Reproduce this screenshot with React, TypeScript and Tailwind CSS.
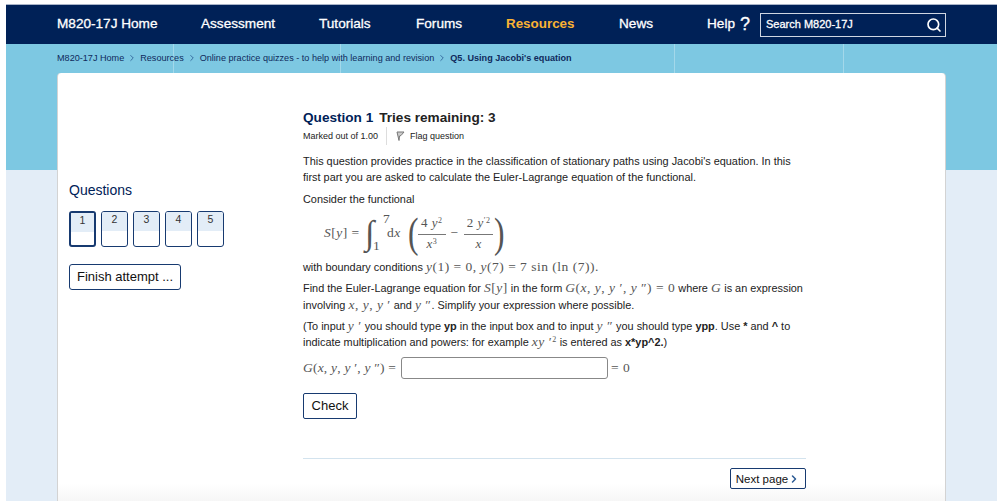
import type { ReactNode } from "react";
import { ChevronRight, Search } from "lucide-react";

const crumbs = ["M820-17J Home", "Resources", "Online practice quizzes - to help with learning and revision"];

// inline maths: serif, gray and a bit spaced out like the typeset equations
function M({ children, className = "" }: { children: ReactNode; className?: string }) {
  return (
    <span className={`font-['Liberation_Serif',serif] text-[13.5px] leading-none tracking-[0.5px] text-[#555] ${className}`}>
      {children}
    </span>
  );
}

function I({ children }: { children: ReactNode }) {
  return <i>{children}</i>;
}

function Frac({ top, bottom }: { top: ReactNode; bottom: ReactNode }) {
  return (
    <span className="inline-flex flex-col items-center text-[13px] leading-[18px]">
      <span className="h-[20px] px-[3px]">{top}</span>
      <span className="h-[18px] w-full border-t border-[#777] text-center">{bottom}</span>
    </span>
  );
}

export default function App() {
  return (
    <div className="h-[501px] w-[1004px] overflow-hidden bg-white font-['Liberation_Sans',sans-serif]">
      <div className="h-[4px] w-full bg-white" />
      <div className="h-[497px] pl-[6px] pr-[7px]">
        <header className="flex h-[40px] items-center border-t border-[#a9b4c8] bg-[#002157] pl-[51px] text-[13.6px] text-white [-webkit-text-stroke:0.3px_white]">
          <span className="w-[144px]">M820-17J Home</span>
          <span className="w-[118px]">Assessment</span>
          <span className="w-[97px]">Tutorials</span>
          <span className="w-[90px]">Forums</span>
          <span className="w-[113px] text-[13.4px] font-bold text-[#f9b233] [-webkit-text-stroke:0]">Resources</span>
          <span className="w-[88px]">News</span>
          <span className="flex w-[53px] items-center gap-[5px]">
            Help <span className="text-[18px] leading-none">?</span>
          </span>
          <div className="flex h-[24px] w-[186px] items-center justify-between border border-[#cfd6e2] pl-[5px] pr-[3px] text-[11px]">
            Search M820-17J
            <Search size={16} strokeWidth={2.5} />
          </div>
        </header>

        <div className="h-[457px] bg-[linear-gradient(#7dc8e2_0,#7dc8e2_126px,#e3edf7_126px)]">
          <nav className="relative flex h-[29px] items-center gap-[3px] pl-[51px] text-[9.1px] text-[#0f2a5c]">
            <span className="absolute left-[167px] top-0 h-full w-px bg-[#a3d8ea]" />
            <span className="absolute left-[334px] top-0 h-full w-px bg-[#a3d8ea]" />
            <span className="absolute left-[668px] top-0 h-full w-px bg-[#a3d8ea]" />
            <span className="absolute left-[837px] top-0 h-full w-px bg-[#a3d8ea]" />
            {crumbs.map((crumb) => (
              <span key={crumb} className="relative flex items-center gap-[3px]">
                {crumb}
                <ChevronRight size={10} className="text-[#2b5a93]" />
              </span>
            ))}
            <b className="relative">Q5. Using Jacobi's equation</b>
          </nav>

          <main className="ml-[51px] flex h-[428px] w-[889px] rounded-t-[4px] border-x border-[#d3d3d3] bg-[linear-gradient(#fff_0,#fff_410px,#f6f6f6_428px)]">
            <aside className="w-[245px] shrink-0 pl-[11px] pt-[108px]">
              <h2 className="text-[14px] leading-[18px] text-[#002157]">Questions</h2>
              <div className="mt-[12px] flex gap-[5px]">
                {[1, 2, 3, 4, 5].map((n) => (
                  <div
                    key={n}
                    className={`h-[36px] w-[27px] overflow-hidden rounded-[3px] border-[#173a70] text-center text-[10.5px] text-[#333] ${n === 1 ? "border-2" : "border"}`}
                  >
                    <div className="h-[19px] bg-[#e3edf7] leading-[15px]">{n}</div>
                  </div>
                ))}
              </div>
              <button className="mt-[17px] h-[26px] w-[112px] rounded-[3px] border border-[#173a70] text-[13px] text-[#111]">
                Finish attempt ...
              </button>
            </aside>

            <section className="w-[503px] pt-[36px] text-[10.9px] leading-[16px] text-[#222]">
              <h1 className="flex gap-[6px] text-[13.6px] font-bold leading-[18px]">
                <span className="text-[#002157]">Question 1</span>
                <span>Tries remaining: 3</span>
              </h1>
              <div className="flex h-[18px] items-center text-[9px]">
                <span className="pr-[8px]">Marked out of 1.00</span>
                <span className="flex h-full items-center gap-[5px] border-l border-[#ddd] pl-[9px]">
                  <svg width="9" height="10" viewBox="0 0 9 10" fill="#ccc" stroke="#777">
                    <path d="M1 1h7L5 4.5 3.5 5 3 9.5z" />
                  </svg>
                  Flag question
                </span>
              </div>

              <p className="mt-[8px] w-[495px]">
                This question provides practice in the classification of stationary paths using Jacobi's equation. In this first part you are asked to calculate the Euler-Lagrange equation of the functional.
              </p>
              <p className="mt-[6px]">Consider the functional</p>

              <div className="flex h-[51px] items-center pl-[21px]">
                <M className="w-[41px] shrink-0"><I>S</I>[<I>y</I>] =</M>
                <span className="relative w-[22px] shrink-0">
                  <M className="text-[34px]"><i>∫</i></M>
                  <M className="absolute left-[18px] top-[-4px] text-[9px]">7</M>
                  <M className="absolute bottom-[-3px] left-[8px] text-[9px]">1</M>
                </span>
                <M className="w-[21px] shrink-0">d<I>x</I></M>
                <M className="inline-block w-[10px] origin-left scale-x-75 text-[42px] font-thin">(</M>
                <M><Frac top={<>4 <I>y</I><sup className="text-[8px]">2</sup></>} bottom={<><I>x</I><sup className="text-[8px]">3</sup></>} /></M>
                <M className="mx-[5px]">−</M>
                <M><Frac top={<>2 <I>y</I><sup className="text-[8px]">′2</sup></>} bottom={<I>x</I>} /></M>
                <M className="ml-[1px] inline-block origin-left scale-x-75 text-[42px] font-thin">)</M>
              </div>

              <p className="mt-[1px]">
                with boundary conditions <M><I>y</I>(1) = 0, <I>y</I>(7) = 7 sin (ln (7)).</M>
              </p>
              <p className="mt-[5px] w-[503px] leading-[17px]">
                Find the Euler-Lagrange equation for <M><I>S</I>[<I>y</I>]</M> in the form <M><I>G</I>(<I>x</I>, <I>y</I>, <I>y</I> ′, <I>y</I> ″) = 0</M> where <M><I>G</I></M> is an expression involving <M><I>x</I>, <I>y</I>, <I>y</I> ′</M> and <M><I>y</I> ″</M>. Simplify your expression where possible.
              </p>
              <p className="mt-[4px] w-[495px]">
                (To input <M><I>y</I> ′</M> you should type <b>yp</b> in the input box and to input <M><I>y</I> ″</M> you should type <b>ypp</b>. Use <b>*</b> and <b>^</b> to indicate multiplication and powers: for example <M><I>xy</I> ′<sup className="text-[8px]">2</sup></M> is entered as <b>x*yp^2.</b>)
              </p>

              <div className="mt-[7px] flex items-center">
                <M className="w-[98px] shrink-0 whitespace-nowrap tracking-[0.2px]!"><I>G</I>(<I>x</I>, <I>y</I>, <I>y</I> ′, <I>y</I> ″) =</M>
                <div className="h-[22px] w-[207px] rounded-[3px] border border-[#888]" />
                <M className="ml-[3px]">= 0</M>
              </div>

              <button className="mt-[14px] h-[26px] w-[54px] rounded-[2px] border border-[#173a70] text-[13px] text-[#111]">
                Check
              </button>

              <div className="mt-[39px] border-t border-[#d3e3ee]" />
              <div className="mt-[9px] flex justify-end">
                <button className="flex h-[21px] w-[76px] items-center justify-center rounded-[2px] border border-[#173a70] text-[11.5px] text-[#111]">
                  Next page
                  <ChevronRight size={12} strokeWidth={3} className="text-[#2b5a93]" />
                </button>
              </div>
            </section>
          </main>
        </div>
      </div>
    </div>
  );
}
